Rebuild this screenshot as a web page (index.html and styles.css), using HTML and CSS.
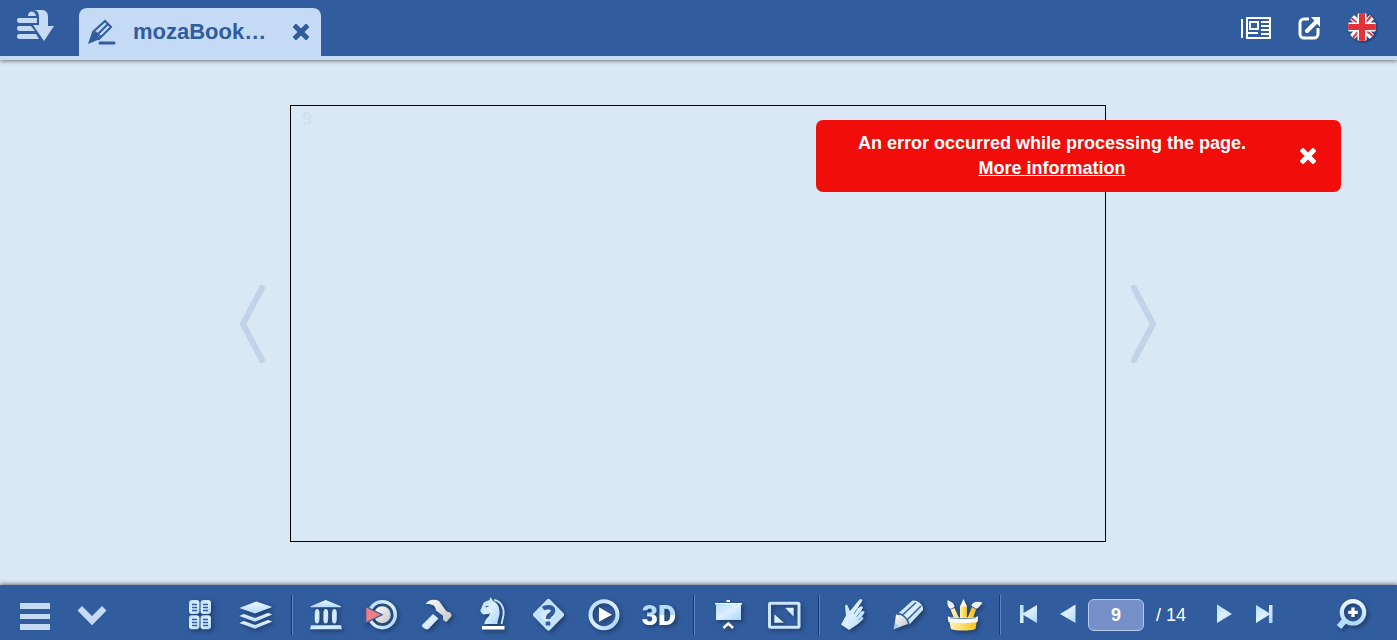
FILE: index.html
```html
<!DOCTYPE html>
<html lang="en">
<head>
    <meta charset="UTF-8">
    <meta name="viewport" content="width=device-width, initial-scale=1.0">
    <title>mozaBook</title>
    <link rel="stylesheet" href="styles.css">
</head>
<body>
<!-- Shared gradients -->
<svg class="defs" width="0" height="0" aria-hidden="true">
    <defs>
        <linearGradient id="ice" x1="0" y1="0" x2="1" y2="1">
            <stop offset="0" stop-color="#b4dcfd"/>
            <stop offset="0.5" stop-color="#ddf0ff"/>
            <stop offset="1" stop-color="#a4d4fb"/>
        </linearGradient>
        <linearGradient id="iceDown" x1="0" y1="0" x2="0" y2="1">
            <stop offset="0" stop-color="#eef8ff"/>
            <stop offset="1" stop-color="#b0dafc"/>
        </linearGradient>
        <linearGradient id="metal" x1="0" y1="0" x2="1" y2="1">
            <stop offset="0" stop-color="#ffffff"/>
            <stop offset="1" stop-color="#c3c3c8"/>
        </linearGradient>
        <linearGradient id="gold" x1="0" y1="0" x2="1" y2="0">
            <stop offset="0" stop-color="#fff6b0"/>
            <stop offset="1" stop-color="#f6c21c"/>
        </linearGradient>
        <linearGradient id="text3d" x1="0" y1="0" x2="0" y2="1">
            <stop offset="0.5" stop-color="#b4dcfd"/>
            <stop offset="0.5" stop-color="#ffffff"/>
        </linearGradient>
    </defs>
</svg>

<header class="topbar">
    <button class="brand" aria-label="Books">
        <svg width="40" height="40" viewBox="0 0 40 40" fill="#c5dbf5">
            <path d="M3 14h18v5H4a2 2 0 0 1-1-5zM3 22h12l4 5H4a2 2 0 0 1-1-5zM3 30h17l3 5H4a2 2 0 0 1-1-5z"/>
            <path d="M12 12c0-6 7-6 8 0z"/>
            <path d="M17 6h9c4 0 6 3 6 7v9h6L28 37 17 21h6v-7c0-5-1-8-6-8z"/>
        </svg>
    </button>
    <div class="tab">
        <svg width="28" height="28" viewBox="0 0 28 28" fill="none" stroke="#315c9e" stroke-width="2">
            <path d="M5 14 17 3l6 6-12 12zM9 17 20 6M7 14l6 5"/>
            <path d="M0 26 4 14l8 7z" fill="#315c9e" stroke="none"/>
            <path d="M12 25h14" stroke-width="3" stroke-linecap="round"/>
        </svg>
        <span class="tab-title">mozaBook…</span>
        <button class="tab-close" aria-label="Close tab">
            <svg width="16" height="16" viewBox="0 0 16 16"><path d="M3 3 13 13M13 3 3 13" stroke="#315c9e" stroke-width="5" stroke-linecap="square"/></svg>
        </button>
    </div>
    <nav class="top-actions">
        <button aria-label="News">
            <svg width="30" height="24" viewBox="0 0 30 24" fill="none" stroke="#fff" stroke-width="2">
                <path d="M1 3v19"/>
                <rect x="6" y="2" width="23" height="20" stroke-width="2"/>
                <rect x="9" y="6" width="8" height="7"/>
                <path d="M20 6h8M20 10h8M20 14h8M7 17h10M20 18h8"/>
            </svg>
        </button>
        <button aria-label="Share">
            <svg width="24" height="24" viewBox="0 0 24 24" fill="none" stroke="#fff" stroke-width="3">
                <path d="M12 3H7a4 4 0 0 0-4 4v11a4 4 0 0 0 4 4h10a4 4 0 0 0 4-4v-6"/>
                <path d="m10 15 9-9" stroke-width="4" stroke-linecap="round"/>
                <path d="M14 1h9v10z" fill="#fff" stroke="none"/>
            </svg>
        </button>
        <button aria-label="Language: English">
            <svg class="flag" width="30" height="30" viewBox="0 0 30 30">
                <clipPath id="round"><circle cx="15" cy="14" r="14"/></clipPath>
                <g clip-path="url(#round)">
                    <path fill="#2f5092" d="M0 0h30v30H0z"/>
                    <path d="m2 1 26 26M28 1 2 27" stroke="#fff" stroke-width="6"/>
                    <path d="m3 4 24 20M25 2 5 26" stroke="#e2383f" stroke-width="2"/>
                    <path d="M15 0v30M0 14h30" stroke="#fff" stroke-width="9"/>
                    <path d="M15 0v30M0 14h30" stroke="#e2333a" stroke-width="6"/>
                </g>
            </svg>
        </button>
    </nav>
</header>

<main class="viewer">
    <button class="turn" aria-label="Previous page">
        <svg width="26" height="78" viewBox="0 0 26 78"><path d="M23 3 4 39l19 36"/></svg>
    </button>
    <section class="page"><span class="page-number">9</span></section>
    <button class="turn" aria-label="Next page">
        <svg width="26" height="78" viewBox="0 0 26 78"><path d="m3 3 19 36L3 75"/></svg>
    </button>
    <div class="toast" role="alert">
        <p>An error occurred while processing the page.<br><a href="#">More information</a></p>
        <button aria-label="Close message">
            <svg width="16" height="16" viewBox="0 0 16 16"><path d="M3 3 13 13M13 3 3 13" stroke="#fff" stroke-width="5" stroke-linecap="square"/></svg>
        </button>
    </div>
</main>

<footer class="toolbar">
    <div class="group menu">
        <button aria-label="Menu">
            <svg viewBox="0 0 40 40" fill="#c5dbf5"><path d="M5 8h30v6H5zM5 19h30v5H5zM5 29h30v6H5z"/></svg>
        </button>
        <button aria-label="Hide toolbar">
            <svg viewBox="0 0 40 40" fill="#c5dbf5"><path d="m5.500 15.500 4.500-4.500 10 10 10-10 4.500 4.500L20 30.300z"/></svg>
        </button>
    </div>

    <div class="group tools pages">
        <button aria-label="Thumbnails">
            <svg viewBox="0 0 40 40">
                <g fill="url(#ice)">
                    <rect x="9" y="5" width="10.5" height="14" rx="3"/><rect x="20.5" y="5" width="10.5" height="14" rx="3"/>
                    <rect x="9" y="20.3" width="10.5" height="14" rx="3"/><rect x="20.5" y="20.3" width="10.5" height="14" rx="3"/>
                </g>
                <path d="M12 9.5h5M12 12.5h5M12 15.5h5M23 9.5h5M23 12.5h5M23 15.5h5M12 24.5h5M12 27.5h5M12 30.5h5M23 24.5h5M23 27.5h5M23 30.5h5" stroke="#315c9e" stroke-width="1.3"/>
            </svg>
        </button>
        <button aria-label="Layers">
            <svg viewBox="0 0 40 40" fill="url(#iceDown)">
                <path d="m3.3 13 17-6.5L36.3 12 19 18.5z"/>
                <path d="m3.3 21 4.5-2L19 23l13-5 4.3 1.5L19 26.7z"/>
                <path d="m3.3 28 4.5-2L19 30l13-5 4.3 1.5L19 33.7z"/>
            </svg>
        </button>
    </div>

    <div class="group tools content">
        <button aria-label="Library">
            <svg viewBox="0 0 40 40" fill="url(#ice)">
                <path d="m4.7 11.3 15-6.3L35 11.3v1H4.7z" fill="url(#iceDown)"/>
                <rect x="8.700" y="14" width="4.800" height="14.500" rx="2.400" ry="5"/><rect x="17.400" y="14" width="4.800" height="14.500" rx="2.400" ry="5"/><rect x="26" y="14" width="4.800" height="14.500" rx="2.400" ry="5"/>
                <path d="M5 30.3h30l1 4H4z"/>
            </svg>
        </button>
        <button aria-label="Exercises">
            <svg viewBox="0 0 40 40">
                <circle cx="20.3" cy="19.7" r="13" fill="none" stroke="url(#ice)" stroke-width="3.4"/>
                <circle cx="20.3" cy="19.7" r="8.5" fill="url(#metal)"/>
                <path d="m2 10 19.5 9.7L2 29.5z" fill="#315c9e"/>
                <path d="m4.3 12.5 14.4 7.2-14.4 7.2z" fill="#ee7d82"/>
            </svg>
        </button>
        <button aria-label="Tools">
            <svg viewBox="0 0 40 40">
                <path d="m16 19 5.500 4.500L11.500 34c-2 1.500-7-1.500-6.500-4z" fill="url(#ice)"/>
                <path d="M8.700 9C11 5 17 3.500 22 6l6.500 9c1 2 3 1.500 4.500 2.500 1 1 1.500 2 1.700 3.500l-5 5.700c-2 0-3.500-1-3.700-3v-3L19 15.500c0-5-4-7-10.300-6.500z" fill="url(#metal)"/>
            </svg>
        </button>
        <button aria-label="Games">
            <svg viewBox="0 0 40 40">
                <path d="M11.500 29c0-5 4.500-6 5.500-11-2 2-3 .5-5 1.500-2 .5-4.500-1.500-4.700-4.500C9 13 9.500 9 11 7.500c2-1.500 4-1.500 5.500-2.500l1-3 2.500 4c5 2 7 7 6.500 13-.5 4-2 6-2 10z" fill="url(#ice)"/>
                <path d="M21 5c7 1 10.500 8 9.500 15l-2 9" fill="none" stroke="#c5e4fd" stroke-width="1.800"/>
                <path d="m12.500 12 3-1" stroke="#315c9e" stroke-width="1.300"/>
                <path d="M9 31h22.500v3.500H9z" fill="#fff"/>
            </svg>
        </button>
        <button aria-label="Quiz">
            <svg viewBox="0 0 40 40" fill="none">
                <path d="M20.500 6.500 33.500 19.700 20.500 33 7.500 19.700z" fill="url(#ice)" stroke="#c3e3fd" stroke-width="5" stroke-linejoin="round"/>
                <path d="M15 13.500c3-2 10-2 10 2 0 5-5 3-5 8.500" stroke="#315c9e" stroke-width="4.500"/>
                <path d="M17.700 26.500h4.600v4h-4.600z" fill="#315c9e"/>
            </svg>
        </button>
        <button aria-label="Play">
            <svg viewBox="0 0 40 40">
                <circle cx="20" cy="19.700" r="13.500" fill="none" stroke="url(#ice)" stroke-width="4"/>
                <path d="m15 12.300 13 7.400-13 7z" fill="#fff"/>
            </svg>
        </button>
        <button aria-label="3D">
            <svg viewBox="0 0 40 40"><text class="label-3d" x="20" y="30" text-anchor="middle" fill="url(#text3d)">3D</text></svg>
        </button>
    </div>

    <div class="group tools present">
        <button aria-label="Presentation">
            <svg viewBox="0 0 40 40">
                <path d="M18.500 5h3.500v2h-3.500zM7 8h27v1.500H7z" fill="#fff"/>
                <path d="M8 9h25v16H8z" fill="url(#ice)"/>
                <path d="m15.500 33 4.800-4.500 4.800 4.500" fill="none" stroke="#fff" stroke-width="2.500"/>
            </svg>
        </button>
        <button aria-label="Full screen">
            <svg viewBox="0 0 40 40">
                <rect x="5.500" y="8.300" width="29.500" height="24" rx="1" fill="none" stroke="#cbe6fd" stroke-width="3"/>
                <path d="M10.300 19.300 20 27.700h-9.700zM21 12.700h8.700v9z" fill="url(#ice)"/>
            </svg>
        </button>
    </div>

    <div class="group tools draw">
        <button aria-label="Pointer">
            <svg viewBox="0 0 40 40">
                <path d="m9 29.500 5-9L13 11.500c0-2 2.500-2.500 3 0l2 4.500 9.500-11.500c1.500-1.500 3.500 0 2.500 1.800L25 14l3.500-2.500c1.500-1 3 .5 2 2L28.500 17l2-1c1.500-.5 2.500 1 1.700 2.300L29.500 22c1.500-.5 2.500 1 1.500 2.300L26 29l-9 6z" fill="url(#ice)"/>
                <path d="m25 14-3 5M28.500 17l-4 5M29.500 22l-3 3" stroke="#5c8ecb" stroke-width="1"/>
            </svg>
        </button>
        <button aria-label="Pencil">
            <svg viewBox="0 0 40 40">
                <path d="M10 18.500 24 6c4-2 12 4 11 9L21.500 29.500z" fill="url(#ice)"/>
                <path d="M8 19.500c5 0 11 5 12 9.500L6 34z" fill="url(#metal)"/>
                <path d="m7.500 28 4 4L5.500 34z" fill="#a9c9ee"/>
                <path d="M14 20.500 28 7.500M19 25 33 11M9.500 18.500c5 0 10 5 11.500 10.500" fill="none" stroke="#315c9e" stroke-width="1.500"/>
            </svg>
        </button>
        <button aria-label="Drawing tools">
            <svg viewBox="0 0 40 40">
                <path d="m6.500 14.500 4-1.500 4.500 10h-5zM23.500 23l4.500-11 4 2.500L29 23z" fill="url(#gold)"/>
                <path d="M16 11h7v12h-7z" fill="url(#gold)"/>
                <path d="m16 11.500 3.500-7.500L23 11.500z" fill="#fff"/>
                <path d="M3.700 5C7 7 10.500 8 10.500 12l-4 2C3.500 12 3 8 3.700 5zM38.700 7.700c-5-1.500-10-1.500-11.200 3l4.500 3c3-.5 4-3.500 6.700-6z" fill="#f0f1f5"/>
                <path d="M5 25h28l-1.500 9c-4 2-20 2-24.500 0z" fill="url(#gold)"/>
                <path d="M3.700 21.500c8 1.500 22 1.500 30.500 0L33.500 27c-8 1.500-21 1.500-29 0z" fill="#fff"/>
                <path d="M6 22.800c8 1 18 1 26 0" fill="none" stroke="#5d81b7" stroke-width="1"/>
            </svg>
        </button>
    </div>

    <div class="group tools pager">
        <button aria-label="First page"><svg viewBox="0 0 40 40" fill="url(#ice)"><path d="M12 10h3.500v8L29 10v18l-13.500-8v8H12z"/></svg></button>
        <button aria-label="Back"><svg viewBox="0 0 40 40" fill="url(#ice)"><path d="m12 19 15.500-9.500v18.500z"/></svg></button>
        <input type="text" value="9" aria-label="Page">
        <span class="total">/ 14</span>
        <button aria-label="Forward"><svg viewBox="0 0 40 40" fill="url(#ice)"><path d="m28 19-15-9.500v18.500z"/></svg></button>
        <button aria-label="Last page"><svg viewBox="0 0 40 40" fill="url(#ice)"><path d="M28.500 10H25v8L12 10v18l13-8v8h3.500z"/></svg></button>
    </div>

    <button class="zoom" aria-label="Zoom in">
        <svg viewBox="0 0 40 40" fill="none">
            <path d="m15 24-7 8" stroke="#b4dcfd" stroke-width="6"/>
            <circle cx="22" cy="17.300" r="11.200" stroke="url(#iceDown)" stroke-width="4.200"/>
            <path d="M22 12.500v9.500M17.300 17.300h9.500" stroke="#fff" stroke-width="3.300"/>
        </svg>
    </button>
</footer>
</body>
</html>
```
FILE: styles.css
```css
* {
    box-sizing: border-box;
}

body {
    margin: 0;
    height: 100vh;
    display: flex;
    flex-direction: column;
    background-color: #dae7f4;
    font-family: "Liberation Sans", Arial, sans-serif;
    overflow: hidden;
}

button {
    display: flex;
    align-items: center;
    justify-content: center;
    padding: 0;
    border: none;
    background: none;
    cursor: pointer;
}

svg {
    display: block;
    flex-shrink: 0;
}

.defs {
    position: absolute;
}

/* Top bar */
.topbar {
    display: flex;
    height: 60px;
    padding-left: 16px;
    background-color: #315c9e;
    border-bottom: 4px solid #c5dbf5;
    box-shadow: 0 1px 4px rgba(0, 0, 0, 0.5);
}

.brand {
    height: 48px;
}

.tab {
    display: flex;
    align-items: center;
    width: 242px;
    height: 48px;
    margin: 8px 0 0 23px;
    padding: 0 12px 0 9px;
    background-color: #c5dbf5;
    border-radius: 8px 8px 0 0;
}

.tab-title {
    flex: 1;
    padding-left: 17px;
    color: #315c9e;
    font-size: 22px;
    font-weight: bold;
}

.top-actions {
    display: flex;
    align-items: center;
    gap: 26px;
    margin-left: auto;
    padding-right: 20px;
}

.flag {
    filter: drop-shadow(1px 1px 1px rgba(0, 0, 0, 0.4));
}

/* Page viewer */
.viewer {
    position: relative;
    flex: 1;
    min-height: 0;
    display: flex;
    align-items: center;
    justify-content: center;
    gap: 25px;
    padding: 45px 1px 43px 0;
}

.page {
    height: 100%;
    aspect-ratio: 816 / 437;
    padding: 3px 11px;
    border: 1px solid #000;
}

.page-number {
    color: #d2e0ee;
    font-size: 18px;
    font-weight: bold;
}

.turn path {
    fill: none;
    stroke: #c2d2e7;
    stroke-width: 6;
    stroke-linecap: round;
}

.toast {
    position: absolute;
    top: 60px;
    right: 56px;
    display: flex;
    align-items: center;
    width: 525px;
    padding: 11px 13px 11px 0;
    background-color: #f00d0a;
    border-radius: 7px;
    color: #fff;
    font-size: 18px;
    font-weight: bold;
    line-height: 25px;
    text-align: center;
}

.toast p {
    flex: 1;
    margin: 0;
}

.toast a {
    color: #fff;
}

.toast button {
    width: 40px;
    height: 40px;
}

/* Bottom toolbar */
.toolbar {
    display: flex;
    align-items: center;
    height: 55px;
    padding: 5px 26px 0 15px;
    background-color: #315c9e;
    box-shadow: 0 -1px 4px rgba(0, 0, 0, 0.5);
}

.toolbar svg {
    width: 40px;
    height: 40px;
}

.tools svg,
.zoom svg {
    filter: drop-shadow(2px 2px 2px rgba(0, 0, 0, 0.35));
}

.group {
    display: flex;
    align-items: center;
    justify-content: space-between;
    height: 40px;
}

.menu {
    width: 97px;
}

.tools {
    padding: 0 15px 0 13px;
    border-left: 1px solid #5f86bd;
    box-shadow: -1px 0 0 #123c78;
}

.pages {
    width: 180px;
    padding: 0 16px 0 68px;
    border: none;
    box-shadow: none;
}

.content {
    width: 402px;
}

.present {
    width: 125px;
}

.draw {
    width: 181px;
    padding: 0 16px 0 12px;
}

.pager {
    justify-content: flex-start;
    padding: 0 7px;
}

.pager svg {
    filter: none;
}

.pager input {
    width: 56px;
    height: 32px;
    padding: 0;
    border: 1px solid #b5cbee;
    border-radius: 6px;
    background-color: #7590c8;
    color: #fff;
    font-family: inherit;
    font-size: 18px;
    font-weight: bold;
    text-align: center;
}

.total {
    width: 60px;
    padding-left: 12px;
    color: #fff;
    font-size: 18px;
}

.label-3d {
    font-family: Roboto, "Liberation Sans", sans-serif;
    font-size: 28px;
    font-weight: 900;
}

.zoom {
    margin-left: auto;
}
```
